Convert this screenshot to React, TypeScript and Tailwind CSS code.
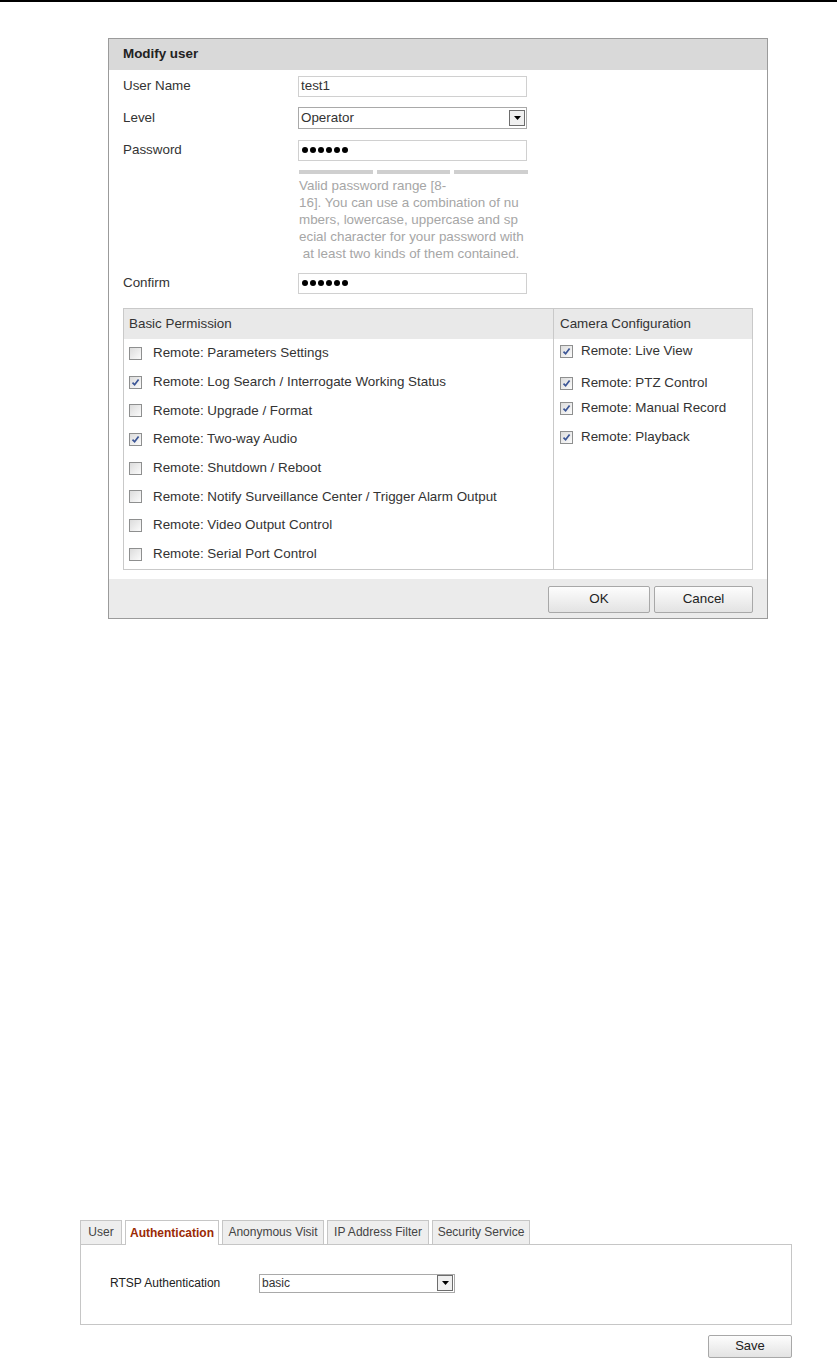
import React from 'react';

const basicPerms: { label: string; checked: boolean }[] = [
  { label: 'Remote: Parameters Settings', checked: false },
  { label: 'Remote: Log Search / Interrogate Working Status', checked: true },
  { label: 'Remote: Upgrade / Format', checked: false },
  { label: 'Remote: Two-way Audio', checked: true },
  { label: 'Remote: Shutdown / Reboot', checked: false },
  { label: 'Remote: Notify Surveillance Center / Trigger Alarm Output', checked: false },
  { label: 'Remote: Video Output Control', checked: false },
  { label: 'Remote: Serial Port Control', checked: false },
];

// カメラ設定（行間がばらばらなので個別に余白を指定）
const cameraPerms = [
  { label: 'Remote: Live View', mt: 'mt-[2px]' },
  { label: 'Remote: PTZ Control', mt: 'mt-[12px]' },
  { label: 'Remote: Manual Record', mt: 'mt-[5px]' },
  { label: 'Remote: Playback', mt: 'mt-[9px]' },
];

const helpLines = [
  'Valid password range [8-',
  '16]. You can use a combination of nu',
  'mbers, lowercase, uppercase and sp',
  'ecial character for your password with',
  '\u00a0at least two kinds of them contained.',
];

const tabs = ['User', 'Authentication', 'Anonymous Visit', 'IP Address Filter', 'Security Service'];
const tabWidths = ['w-[42px]', 'w-[94px]', 'w-[102px]', 'w-[102px]', 'w-[98px]'];

const Checkbox: React.FC<{ checked: boolean }> = ({ checked }) => (
  <div className="w-[13px] h-[13px] border border-[#8e8f8f] bg-gradient-to-br from-[#dcdcdc] to-[#fbfbfb] flex items-center justify-center shrink-0">
    {checked && (
      <svg width="9" height="9" viewBox="0 0 9 9">
        <path d="M1.5 4.6 L3.6 6.8 L7.6 1.4" fill="none" stroke="#3b5596" strokeWidth="1.7" />
      </svg>
    )}
  </div>
);

const SelectBox: React.FC<{ value: string; className: string }> = ({ value, className }) => (
  <div className={`flex items-center border border-[#a9a9a9] bg-white pl-[2px] pr-[1px] ${className}`}>
    <span className="flex-1">{value}</span>
    <div className="w-[16px] h-[16px] border border-[#6d6d6d] bg-[#f0f0f0] flex items-center justify-center">
      <svg width="7" height="4" viewBox="0 0 7 4">
        <path d="M0 0 H7 L3.5 4 Z" fill="#000" />
      </svg>
    </div>
  </div>
);

const TextBox: React.FC<{ children: React.ReactNode }> = ({ children }) => (
  <div className="w-[229px] h-[21px] border border-[#d0d0d0] flex items-center px-[2px]">{children}</div>
);

// パスワードの伏せ字
const Dots = () => (
  <div className="flex gap-[2px] ml-[1px]">
    {[0, 1, 2, 3, 4, 5].map((i) => (
      <div key={i} className="w-[6px] h-[6px] rounded-full bg-black" />
    ))}
  </div>
);

const FormRow: React.FC<{ label: string; children: React.ReactNode }> = ({ label, children }) => (
  <div className="flex items-center h-[32px]">
    <div className="w-[175px]">{label}</div>
    {children}
  </div>
);

const Button: React.FC<{ label: string; className: string }> = ({ label, className }) => (
  <div
    className={`flex items-center justify-center border border-[#a8a8a8] rounded-[2px] bg-gradient-to-b from-[#fdfdfd] to-[#e3e3e3] text-[#222] ${className}`}
  >
    {label}
  </div>
);

export default function App() {
  return (
    <div className="w-[837px] h-[1361px] bg-white font-['Liberation_Sans',Arial,sans-serif] text-[13.4px] text-[#333] overflow-hidden">
      <div className="h-[2px] bg-black" />

      {/* Modify user ダイアログ */}
      <div className="ml-[108px] mt-[36px] w-[660px] border border-[#9b9b9b] flex flex-col">
        <div className="h-[31px] bg-[#d9d9d9] flex items-center px-[14px] font-bold text-[#222]">Modify user</div>

        <div className="px-[14px]">
          <FormRow label="User Name">
            <TextBox>test1</TextBox>
          </FormRow>
          <FormRow label="Level">
            <SelectBox value="Operator" className="w-[229px] h-[22px]" />
          </FormRow>
          <FormRow label="Password">
            <TextBox>
              <Dots />
            </TextBox>
          </FormRow>

          {/* パスワード強度バー */}
          <div className="ml-[176px] w-[229px] flex gap-[4px] mt-[4px]">
            <div className="flex-1 h-[4px] bg-[#cfcfcf]" />
            <div className="flex-1 h-[4px] bg-[#cfcfcf]" />
            <div className="flex-1 h-[4px] bg-[#cfcfcf]" />
          </div>
          <div className="ml-[176px] w-[240px] mt-[3px] text-[#a6a6a6] leading-[17px] whitespace-pre">
            {helpLines.map((l) => (
              <div key={l}>{l}</div>
            ))}
          </div>

          <div className="mt-[5px]">
            <FormRow label="Confirm">
              <TextBox>
                <Dots />
              </TextBox>
            </FormRow>
          </div>

          {/* 権限テーブル */}
          <div className="mt-[9px] border border-[#c9c9c9] flex">
            <div className="w-[430px] border-r border-[#c9c9c9]">
              <div className="h-[30px] bg-[#e9e9e9] flex items-center px-[5px]">Basic Permission</div>
              {basicPerms.map((p) => (
                <div key={p.label} className="h-[28.7px] flex items-center gap-[11px] px-[5px]">
                  <Checkbox checked={p.checked} />
                  <span>{p.label}</span>
                </div>
              ))}
            </div>
            <div className="flex-1">
              <div className="h-[30px] bg-[#e9e9e9] flex items-center px-[6px]">Camera Configuration</div>
              {cameraPerms.map((p) => (
                <div key={p.label} className={`h-[20px] flex items-center gap-[8px] px-[6px] ${p.mt}`}>
                  <Checkbox checked />
                  <span>{p.label}</span>
                </div>
              ))}
            </div>
          </div>
        </div>

        <div className="mt-[9px] h-[39px] bg-[#ebebeb] flex items-center justify-end gap-[4px] pr-[14px] pt-[2px]">
          <Button label="OK" className="w-[102px] h-[27px]" />
          <Button label="Cancel" className="w-[99px] h-[27px]" />
        </div>
      </div>

      {/* 認証タブ */}
      <div className="ml-[80px] mt-[601px] w-[712px] text-[12px]">
        <div className="flex gap-[3px] h-[24px] items-end">
          {tabs.map((t, i) => (
            <div
              key={t}
              className={
                i === 1
                  ? `${tabWidths[i]} h-[25px] border border-b-0 border-[#c6c6c6] bg-white flex items-center justify-center font-bold text-[#9a2a05] relative top-[1px]`
                  : `${tabWidths[i]} h-[24px] border border-b-0 border-[#c6c6c6] bg-[#eeeeee] flex items-center justify-center text-[#444]`
              }
            >
              {t}
            </div>
          ))}
        </div>
        <div className="h-[81px] border border-[#c6c6c6] flex items-center pl-[29px] pb-[2px]">
          <span className="w-[149px] text-[#222]">RTSP Authentication</span>
          <SelectBox value="basic" className="w-[196px] h-[19px] text-[12px]" />
        </div>
        <div className="flex justify-end mt-[10px]">
          <Button label="Save" className="w-[84px] h-[23px] text-[13px]" />
        </div>
      </div>
    </div>
  );
}
